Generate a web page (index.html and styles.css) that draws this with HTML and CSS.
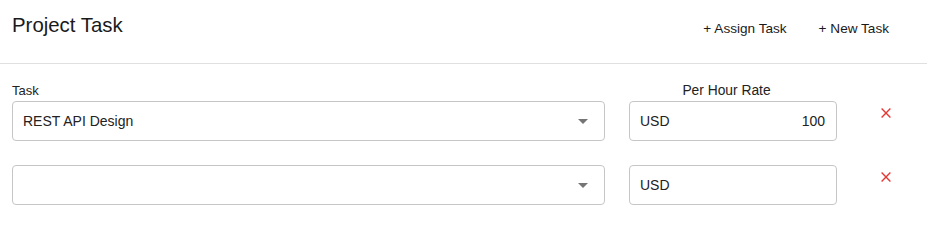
FILE: index.html
```html
<!DOCTYPE html>
<html lang="en">
<head>
<meta charset="utf-8">
<title>Project Task</title>
<link rel="stylesheet" href="styles.css">
</head>
<body>
<header class="header">
  <h1 class="title">Project Task</h1>
  <div class="actions">
    <button class="text-btn" type="button">+ Assign Task</button>
    <button class="text-btn" type="button">+ New Task</button>
  </div>
</header>
<main class="form">
  <div class="labels">
    <div class="label label-task">Task</div>
    <div class="label label-rate">Per Hour Rate</div>
  </div>
  <div class="row">
    <div class="select">
      <span class="select-value">REST API Design</span>
      <span class="caret"></span>
    </div>
    <div class="rate">
      <span>USD</span>
      <span>100</span>
    </div>
    <button class="remove" type="button" aria-label="Remove">
      <svg width="10" height="10" viewBox="0 0 10 10"><path d="M0.6 0.6L9.4 9.4M9.4 0.6L0.6 9.4" stroke="#e53935" stroke-width="1.4" fill="none"/></svg>
    </button>
  </div>
  <div class="row">
    <div class="select">
      <span class="select-value"></span>
      <span class="caret"></span>
    </div>
    <div class="rate">
      <span>USD</span>
      <span></span>
    </div>
    <button class="remove" type="button" aria-label="Remove">
      <svg width="10" height="10" viewBox="0 0 10 10"><path d="M0.6 0.6L9.4 9.4M9.4 0.6L0.6 9.4" stroke="#e53935" stroke-width="1.4" fill="none"/></svg>
    </button>
  </div>
</main>
</body>
</html>
```
FILE: styles.css
```css
* { box-sizing: border-box; }
body {
  margin: 0;
  background: #fff;
  font-family: "Liberation Sans", Arial, sans-serif;
  color: #212121;
}
.header {
  display: flex;
  justify-content: space-between;
  align-items: flex-start;
  height: 64px;
  padding: 0 22px 0 12px;
  border-bottom: 1px solid #e0e0e0;
}
.title {
  margin: 14px 0 0;
  font-size: 20.4px;
  line-height: 23px;
  font-weight: 400;
  color: #1a1a1a;
}
.actions {
  display: flex;
  margin-top: 21px;
}
.text-btn {
  border: 0;
  background: none;
  padding: 0 16px;
  font-family: inherit;
  font-size: 13.6px;
  line-height: 16px;
  color: #1a1a1a;
  cursor: pointer;
}
.form {
  padding: 19px 12px 0;
}
.labels {
  display: flex;
  gap: 24px;
  margin-bottom: 3px;
}
.label {
  line-height: 15px;
  color: #222;
}
.label-task {
  width: 593px;
  font-size: 13px;
}
.label-rate {
  width: 208px;
  font-size: 13.8px;
  text-align: center;
  padding-right: 13px;
}
.row {
  display: flex;
  align-items: flex-start;
  gap: 24px;
  margin-bottom: 24px;
}
.select, .rate {
  height: 40px;
  border: 1px solid #c6c6c6;
  border-radius: 4px;
  display: flex;
  align-items: center;
  justify-content: space-between;
  font-size: 14px;
  color: #222;
}
.select {
  width: 593px;
  padding: 0 16px 0 10px;
}
.rate {
  width: 208px;
  padding: 0 11px 0 10px;
}
.caret {
  width: 0;
  height: 0;
  border-left: 5px solid transparent;
  border-right: 5px solid transparent;
  border-top: 5px solid #757575;
  margin-top: 1px;
}
.remove {
  width: 50px;
  height: 24px;
  margin-top: 0;
  padding: 0;
  border: 0;
  background: none;
  display: flex;
  align-items: center;
  justify-content: center;
  cursor: pointer;
}
.remove svg { display: block; }
```
